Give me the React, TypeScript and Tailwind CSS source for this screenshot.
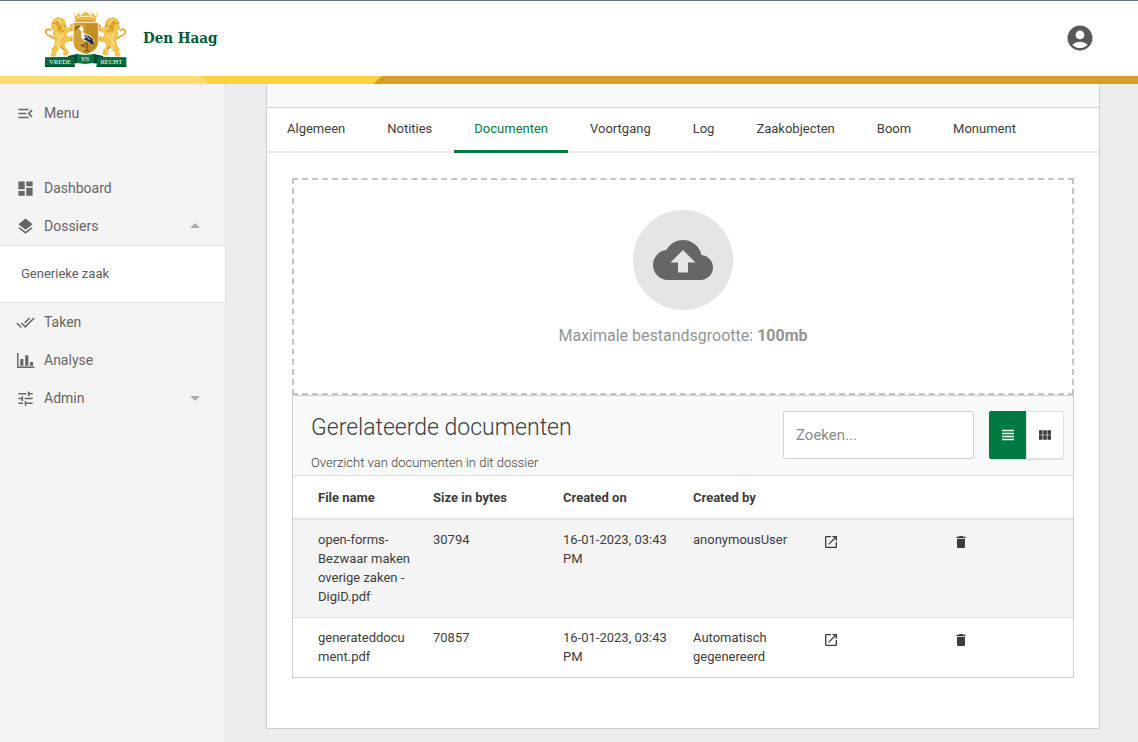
import type { ComponentType, ReactNode } from 'react';
import {
  MdAccountCircle,
  MdArrowDropDown,
  MdArrowDropUp,
  MdCloudUpload,
  MdDashboard,
  MdDelete,
  MdDoneAll,
  MdLayers,
  MdMenuOpen,
  MdOpenInNew,
  MdTune,
  MdViewHeadline,
  MdViewModule,
} from 'react-icons/md';

type IconType = ComponentType<{ className?: string }>;

function ChartIcon({ className }: { className?: string }) {
  return (
    <svg viewBox="0 0 18 18" className={className} fill="currentColor" aria-hidden="true">
      <path d="M1 2h1.4v12.8H17.400V16H1zM4 7.500h3V14H4zM8.700 4h3v10h-3zM13.200 10.500h3V14h-3z" />
    </svg>
  );
}

function Lion() {
  return (
    <g>
      <path
        d="M34 82c-9-2-17-8-16-15 1-6 9-7 12-3M34 84c10 1 14 7 12 18-2 9-8 12-10 18"
        fill="none"
        stroke="#dda92f"
        strokeWidth="5"
        strokeLinecap="round"
      />
      <path
        d="M40 34l6-3 5-4 5 3 7 1 7 6 3 8-1 7 5 6 4 1 9-8 4 2-1 5-8 9-8 3-3 6 6 9 8-4 5 3-2 6-9 6-8-1-5 8 2 10 7 8 2 8-3 5h-9l-1-4 4-3-5-9-8-7-6 9-7 6 1 7-3 4h-9l-2-4 4-5 1-10 7-8-1-11 3-9-6-10-1-9 4-8-8-2-2-4z"
        fill="#f2c450"
        stroke="#f2c450"
        strokeWidth="3"
        strokeLinejoin="round"
      />
      <path d="M46 38l6-1 5 3 5 7 2 9-4 9-6 4-5-6 1-10-3-6-4-1z" fill="#dda52d" />
      <path d="M51 33l6 5 3 10M47 72l7 8 1 13-8 13M59 84l8-7M57 101l-5 17" fill="none" stroke="#ffe08a" strokeWidth="4" />
      <path d="M34 43l8 1M68 48l5 7M61 109l5 10M69 67l-8-2" fill="none" stroke="#b67d1c" strokeWidth="2.500" />
      <path d="M86 52l7-6M88 64l6-1M85 91l9 1" stroke="#d09622" strokeWidth="3" />
    </g>
  );
}

function CityCrest() {
  return (
    <svg viewBox="0 -7 276 192" className="h-16 w-[92px]" role="img" aria-label="Wapen van Den Haag">
      <g transform="translate(-2 -2) scale(1.080 1.060)">
        <Lion />
      </g>
      <g transform="translate(275 -2) scale(-1.080 1.060)">
        <Lion />
      </g>
      <g transform="translate(4 1)">
        <path
          d="M99 15l5 8 7-9 6 8 8-9 8-2 8 2 7 9 7-8 7 9 6-8-5 20 2 5-11 2h-42l-12-2 2-5z"
          fill="#e9b943"
        />
        <path d="M106 28c9-5 17-6 27-5 10-1 19 0 28 5" fill="none" stroke="#fff2bd" strokeWidth="3" />
        <path d="M109 36h48" stroke="#a97419" strokeWidth="2" strokeDasharray="5 3" />
        <g fill="#f9dc82">
          <circle cx="99" cy="14" r="3" />
          <circle cx="114" cy="13" r="3" />
          <circle cx="133" cy="10" r="3" />
          <circle cx="152" cy="13" r="3" />
          <circle cx="168" cy="14" r="3" />
        </g>
        <path
          d="M96 42h75v58c0 20-14 29-37 38-24-9-38-18-38-38z"
          fill="#c48e23"
          stroke="#fff6d8"
          strokeWidth="2"
        />
        <path d="M98 44h35v91c-22-9-35-18-35-36z" fill="#d3a033" />
        <path d="M113 58c0-5 8-7 12-2 3 5-2 11 1 16l8 4 12 4 11 13 3 10-8 2-15-3-12-9c-7-5-7-13-5-19 1-5-1-7-4-10z" fill="#fffdf4" />
        <path d="M116 54l-11 1-2 10" fill="none" stroke="#35301f" strokeWidth="3" />
        <path d="M128 78l14 3 12 10 5 16-11-2-12-9-11-5 8-2z" fill="#29313a" />
        <path d="M132 82l8 4 6 8" fill="none" stroke="#dfe2df" strokeWidth="3" />
        <path d="M138 99l-2 27M134 98l-3 10-13 2 15 6M136 125l-8 4M137 126l8 2" fill="none" stroke="#443617" strokeWidth="2.500" />
      </g>
      <path d="M84 143l30-7v29l-30-1zM189 143l-30-7v29l30 1z" fill="#00482b" />
      <path d="M111 137l25 3 25-3v27l-25 3-25-3z" fill="#08764a" />
      <path d="M15 147l89-2v30H15zM259 147l-89-2v30h89z" fill="#006c41" />
      <path d="M15 171h89v5H15zM170 171h89v5h-89z" fill="#004d2e" />
      <g className="font-['Liberation_Serif',serif]" fill="#ffffff" textAnchor="middle">
        <text x="60" y="168" fontSize="20">VREDE</text>
        <text x="136" y="159" fontSize="17">EN</text>
        <text x="214" y="168" fontSize="20">RECHT</text>
      </g>
    </svg>
  );
}

function Header() {
  return (
    <header className="border-t border-[#66757f] bg-white">
      <div className="flex h-[75px] items-center justify-between pr-[43px] pb-[2px] pl-10">
        <a href="#home" className="flex items-center">
          <CityCrest />
          <span className="pl-[11px] font-['DejaVu_Serif_Condensed','DejaVu_Serif',serif] text-[15px] leading-5 font-bold text-[#00583a]">
            Den Haag
          </span>
        </a>
        <button type="button" aria-label="Account" className="text-[#595959]">
          <MdAccountCircle className="size-[30px]" />
        </button>
      </div>
      <div className="h-2 bg-[#d79f28]">
        <div className="h-full w-[382px] bg-[#ffd340] [clip-path:polygon(0_0,100%_0,calc(100%-9px)_100%,0_100%)]">
          <div className="h-full w-[208px] bg-[#ffdc70] [clip-path:polygon(0_0,calc(100%-5px)_0,100%_100%,0_100%)]" />
        </div>
      </div>
    </header>
  );
}

function NavItem({ icon: Icon, label, end }: { icon: IconType; label: string; end?: ReactNode }) {
  return (
    <a href={`#${label.toLowerCase()}`} className="flex h-[38px] items-center px-4 text-[#666666]">
      <Icon className="size-[19px]" />
      <span className="flex-1 pl-[9px]">{label}</span>
      {end}
    </a>
  );
}

function Sidebar() {
  return (
    <nav className="w-[226px] shrink-0 border-r border-[#e1e1e1] bg-[#f4f4f4] pt-[10px] text-sm">
      <NavItem icon={MdMenuOpen} label="Menu" />
      <div className="pt-[37px]">
        <NavItem icon={MdDashboard} label="Dashboard" />
        <NavItem
          icon={MdLayers}
          label="Dossiers"
          end={<MdArrowDropUp className="mr-[2px] size-6 text-[#adadad]" />}
        />
        <div className="flex h-[58px] items-center border-y border-[#e1e1e1] bg-white px-[21px] text-[13px]">
          <a href="#generieke-zaak" className="text-[#5c5c5c]">Generieke zaak</a>
        </div>
        <NavItem icon={MdDoneAll} label="Taken" />
        <NavItem icon={ChartIcon} label="Analyse" />
        <NavItem
          icon={MdTune}
          label="Admin"
          end={<MdArrowDropDown className="mr-[2px] size-6 text-[#adadad]" />}
        />
      </div>
    </nav>
  );
}

const tabs = ['Algemeen', 'Notities', 'Documenten', 'Voortgang', 'Log', 'Zaakobjecten', 'Boom', 'Monument'];

function Tabs() {
  return (
    <div role="tablist" className="flex h-[45px] gap-[2px] shadow-[inset_0_-2px_0_#ebebeb]">
      {tabs.map((tab) => (
        <button
          key={tab}
          type="button"
          role="tab"
          aria-selected={tab === 'Documenten'}
          className="border-b-3 border-transparent px-5 text-[13px] text-[#3d3d3d] aria-selected:border-[#007a41] aria-selected:text-[#007a41]"
        >
          {tab}
        </button>
      ))}
    </div>
  );
}

const documents = [
  {
    name: 'open-forms-Bezwaar maken overige zaken - DigiD.pdf',
    size: '30794',
    createdOn: '16-01-2023, 03:43 PM',
    createdBy: 'anonymousUser',
  },
  {
    name: 'generateddocument.pdf',
    size: '70857',
    createdOn: '16-01-2023, 03:43 PM',
    createdBy: 'Automatisch gegenereerd',
  },
];

function DocumentTable() {
  return (
    <table className="w-full table-fixed text-left text-[13px] leading-[19px]">
      <thead>
        <tr className="h-[43px] border-b-2 border-[#dde2e6]">
          <th className="pr-[10px] pl-[25px] font-bold">File name</th>
          <th className="px-[10px] font-bold">Size in bytes</th>
          <th className="px-[10px] font-bold">Created on</th>
          <th className="px-[10px] font-bold">Created by</th>
          <th aria-label="Openen" />
          <th aria-label="Verwijderen" />
        </tr>
      </thead>
      <tbody>
        {documents.map((doc) => (
          <tr key={doc.name} className="border-t border-[#dde2e6] align-top odd:bg-[#f4f4f4]">
            <td className="pt-[10px] pr-[10px] pb-[11px] pl-[25px] break-words">{doc.name}</td>
            <td className="px-[10px] pt-[10px] pb-[11px]">{doc.size}</td>
            <td className="px-[10px] pt-[10px] pb-[11px]">{doc.createdOn}</td>
            <td className="px-[10px] pt-[10px] pb-[11px]">{doc.createdBy}</td>
            <td className="px-[10px] pt-[14px]">
              <button type="button" aria-label={`${doc.name} openen`} className="block">
                <MdOpenInNew className="size-4" />
              </button>
            </td>
            <td className="px-[10px] pt-[14px]">
              <button type="button" aria-label={`${doc.name} verwijderen`} className="block">
                <MdDelete className="size-4" />
              </button>
            </td>
          </tr>
        ))}
      </tbody>
    </table>
  );
}

function Documents() {
  return (
    <section className="border border-[#cfcfcf] bg-white">
      <div className="flex items-start justify-between border-b border-[#dcdfe0] bg-[#f8faf9] pr-[9px] pl-[18px]">
        <div className="pt-4 pb-[3px] font-light">
          <h2 className="text-[23px] leading-8">Gerelateerde documenten</h2>
          <p className="pt-[10px] text-[13px] leading-[18px]">Overzicht van documenten in dit dossier</p>
        </div>
        <div className="flex gap-[15px] pt-[15px]">
          <input
            type="text"
            aria-label="Zoeken"
            placeholder="Zoeken..."
            className="h-12 w-[191px] rounded-xs border border-[#cfd2d8] bg-white px-3 text-[15px] placeholder:text-[#8c8c8c]"
          />
          <div className="flex h-12 rounded-xs shadow-[0_1px_1px_#dddddd]">
            <button
              type="button"
              aria-label="Lijstweergave"
              className="grid w-[37px] place-items-center rounded-l-xs bg-[#007a41] text-white"
            >
              <MdViewHeadline className="size-[18px]" />
            </button>
            <button
              type="button"
              aria-label="Rasterweergave"
              className="grid w-[38px] place-items-center rounded-r-xs border border-[#e2e2e2] bg-white"
            >
              <MdViewModule className="size-4" />
            </button>
          </div>
        </div>
      </div>
      <DocumentTable />
    </section>
  );
}

export default function App() {
  return (
    <div className="flex min-h-screen flex-col bg-[#ededed] font-['Roboto',sans-serif] text-[#3d3d3d]">
      <Header />
      <div className="flex flex-1">
        <Sidebar />
        <main className="min-w-0 flex-1 pr-[38px] pb-3 pl-10">
          <div className="border border-t-0 border-[#cfcfcf] bg-white">
            <div className="h-6 border-b border-[#d3d5d5] bg-[#f8faf9]" />
            <Tabs />
            <div className="px-[25px] pt-[25px] pb-[50px]">
              <label className="flex cursor-pointer flex-col items-center border-2 border-dashed border-[#c4c4c4] pt-[30px] pb-[45px] text-base text-[#949494]">
                <input type="file" className="sr-only" />
                <span className="grid size-[100px] place-items-center rounded-full bg-[#e5e5e5]">
                  <MdCloudUpload className="size-[60px] text-[#666666]" />
                </span>
                <span className="pt-[14px]">
                  Maximale bestandsgrootte: <strong>100mb</strong>
                </span>
              </label>
              <Documents />
            </div>
          </div>
        </main>
      </div>
    </div>
  );
}
